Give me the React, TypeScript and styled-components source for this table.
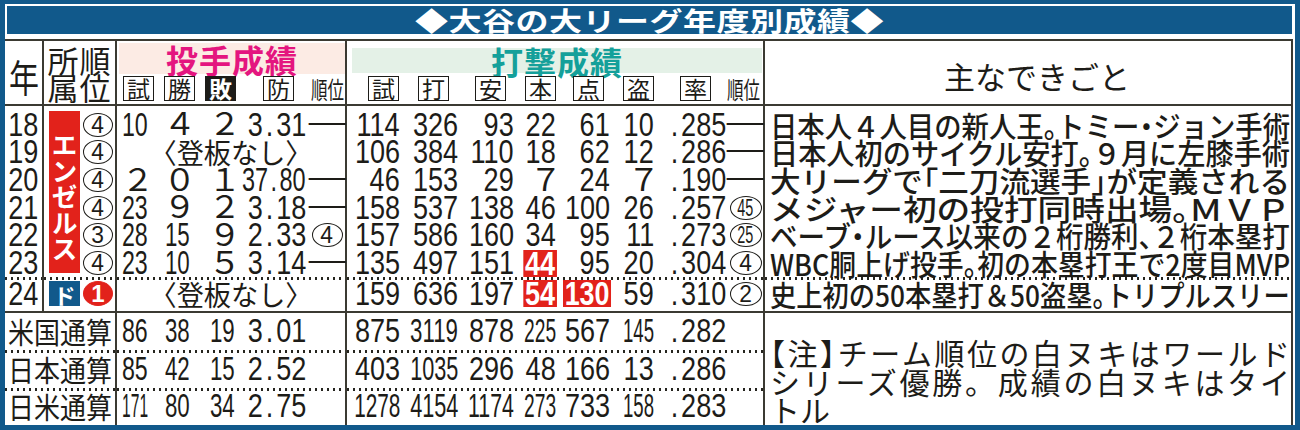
import React, { useLayoutEffect, useRef, useState } from "react";
import styled, { createGlobalStyle, css } from "styled-components";

const BLUE = "#11598b";
const LINE = "#3b3a32";
const INK = "#1d1c18";
const RED = "#e2221b";
const JP = `"Noto Sans CJK JP", "Noto Sans", sans-serif`;
const NUM = `"Liberation Sans", "Noto Sans CJK JP", sans-serif`;

const GlobalStyle = createGlobalStyle`
  html, body { margin: 0; padding: 0; background: #fff; }
  body { font-family: ${JP}; color: ${INK}; }
`;

// squeeze text horizontally so it fits (or fills) a width, like newspaper type
function useSqueeze(max: number, base: number, fill?: boolean) {
  const ref = useRef<HTMLSpanElement>(null);
  const [scale, setScale] = useState(base);
  useLayoutEffect(() => {
    const measure = () => {
      const el = ref.current;
      if (!el || !el.offsetWidth) return;
      const w = el.offsetWidth;
      setScale(fill ? max / w : Math.min(base, max / w));
    };
    measure();
    if (document.fonts) document.fonts.ready.then(measure);
  }, [max, base, fill]);
  return [ref, scale] as const;
}

const Frame = styled.div`
  width: 1300px;
  height: 430px;
  box-sizing: border-box;
  background: ${BLUE};
  padding: 4px 5px 5px 5px;
`;

const Panel = styled.div`
  height: 100%;
  background: #fff;
  display: flex;
  flex-direction: column;
`;

const TitleBar = styled.div`
  margin: 2px 3px 0 2px;
  height: 28px;
  flex-shrink: 0;
  background: ${BLUE};
  display: flex;
  align-items: center;
  justify-content: center;
`;

const TitleText = styled.span`
  color: #fff;
  font-weight: 700;
  font-size: 33px;
  line-height: 28px;
  letter-spacing: 0.5px;
  transform: scaleY(0.8);
`;

const Table = styled.div`
  margin: 5px 2px 0 0;
  border-top: 2px solid ${LINE};
  border-right: 2px solid ${LINE};
  display: grid;
  grid-template-columns: 39px 73px 230px 418px 1fr;
  grid-template-rows: 65px 32.67px repeat(5, 27.67px) 36px 37px 38px 37px;
`;

interface RowProps {
  $r: number;
  $first?: boolean;
  $dot?: boolean;
  $rule?: boolean;
}

const rowCell = css<RowProps>`
  grid-row: ${(p) => p.$r};
  box-sizing: border-box;
  min-width: 0;
  padding-top: ${(p) => (p.$first ? 5 : 0)}px;
  ${(p) =>
    p.$dot &&
    css`
      background-image: linear-gradient(90deg, #26251f 0 2.5px, transparent 2.5px);
      background-size: 6px 2.5px;
      background-repeat: repeat-x;
    `}
  ${(p) =>
    p.$rule &&
    css`
      border-bottom: 2px solid ${LINE};
    `}
`;

const YearCell = styled.div<RowProps>`
  ${rowCell};
  grid-column: 1;
  border-right: 2px solid ${LINE};
  display: flex;
  align-items: center;
  justify-content: center;
`;

const TeamCell = styled.div<RowProps & { $split?: boolean }>`
  ${rowCell};
  grid-column: 2;
  border-right: 2px solid ${LINE};
  display: flex;
  align-items: center;
  justify-content: ${(p) => (p.$split ? "space-between" : "flex-end")};
  padding-right: 2px;
  padding-left: ${(p) => (p.$split ? 5 : 0)}px;
`;

const PitchCell = styled.div<RowProps>`
  ${rowCell};
  grid-column: 3;
  border-right: 2px solid ${LINE};
  display: grid;
  grid-template-columns: 34px 42px 45px 71px 36px;
`;

const BatCell = styled.div<RowProps>`
  ${rowCell};
  grid-column: 4;
  border-right: 2px solid ${LINE};
  display: grid;
  grid-template-columns: 55px 58px 56px 42px 54px 44px 72px 35px;
`;

const EventCell = styled.div<RowProps>`
  ${rowCell};
  grid-column: 5;
  display: flex;
  align-items: center;
  padding-left: 5px;
`;

const SumLabelCell = styled.div<RowProps>`
  ${rowCell};
  grid-column: 1 / 3;
  border-right: 2px solid ${LINE};
  display: flex;
  align-items: center;
  justify-content: center;
`;

const NoteCell = styled.div`
  grid-column: 5;
  grid-row: 9 / 12;
  display: flex;
  flex-direction: column;
  justify-content: flex-end;
  padding: 0 0 1px 5px;
`;

const NoteLine = styled.div<{ $justify?: boolean; $halt?: boolean }>`
  width: 520px;
  white-space: nowrap;
  font-size: 30px;
  line-height: 28.5px;
  ${(p) =>
    p.$justify &&
    css`
      text-align: justify;
      text-align-last: justify;
    `}
  ${(p) =>
    p.$halt &&
    css`
      font-feature-settings: "halt";
    `}
`;

const Slot = styled.div<{ $pr?: number; $center?: boolean; $span?: boolean }>`
  display: flex;
  align-items: center;
  min-width: 0;
  justify-content: ${(p) => (p.$center || p.$span ? "center" : "flex-end")};
  padding-right: ${(p) => p.$pr ?? 0}px;
  ${(p) =>
    p.$span &&
    css`
      grid-column: 1 / -1;
    `}
`;

const NumText = styled.span<{ $wide?: boolean; $hi?: boolean; $origin: string }>`
  display: inline-block;
  flex-shrink: 0;
  white-space: nowrap;
  font-family: ${(p) => (p.$wide ? JP : NUM)};
  font-size: ${(p) => (p.$wide ? 31 : 33)}px;
  line-height: 26px;
  transform-origin: ${(p) => p.$origin} center;
  ${(p) =>
    p.$wide &&
    css`
      margin-right: -6px;
      margin-top: -5px;
    `}
  ${(p) =>
    p.$hi &&
    css`
      background: ${RED};
      color: #fff;
      font-weight: 700;
      padding: 0 2px;
      height: 27px;
      line-height: 28px;
      margin-right: -1px;
    `}
`;

const Dot = styled.span`
  margin: 0 3.5px;
`;

const JpText = styled.span<{ $size: number; $weight?: number; $origin?: string; $halt?: boolean }>`
  display: inline-block;
  flex-shrink: 0;
  white-space: nowrap;
  font-size: ${(p) => p.$size}px;
  line-height: ${(p) => Math.min(p.$size, 26)}px;
  font-weight: ${(p) => p.$weight ?? 400};
  transform-origin: ${(p) => p.$origin ?? "center"} center;
  ${(p) =>
    p.$halt &&
    css`
      font-feature-settings: "halt";
    `}
`;

const Dash = styled.span`
  display: inline-block;
  font-family: ${JP};
  font-size: 32px;
  line-height: 20px;
  transform: translateY(-6px) scaleX(1.45);
`;

const Ring = styled.span<{ $fill?: boolean; $w?: number; $h?: number }>`
  box-sizing: border-box;
  flex-shrink: 0;
  width: ${(p) => p.$w ?? 30}px;
  height: ${(p) => p.$h ?? 24}px;
  border-radius: 50%;
  border: 1.6px solid ${(p) => (p.$fill ? RED : INK)};
  background: ${(p) => (p.$fill ? RED : "transparent")};
  color: ${(p) => (p.$fill ? "#fff" : INK)};
  display: inline-flex;
  align-items: center;
  justify-content: center;
  font-family: ${NUM};
  font-size: 24px;
  font-weight: ${(p) => (p.$fill ? 700 : 400)};
  line-height: 1;
`;

const RingDigits = styled.span<{ $sx: number }>`
  display: inline-block;
  transform: scaleX(${(p) => p.$sx});
`;

const TeamBand = styled.div`
  grid-column: 2;
  grid-row: 2 / 8;
  margin: 5px 0 4px 5px;
  width: 31px;
  box-sizing: border-box;
  padding-top: 11px;
  background: ${RED};
  color: #fff;
  font-weight: 700;
  font-size: 26px;
  line-height: 31px;
  writing-mode: vertical-rl;
  text-align: center;
`;

const TeamChip = styled.span`
  width: 31px;
  height: 25px;
  background: ${BLUE};
  color: #fff;
  font-weight: 700;
  font-size: 22px;
  line-height: 1;
  display: inline-flex;
  align-items: center;
  justify-content: center;
`;

const HeadCell = styled.div<{ $c: number; $line?: boolean; $center?: boolean }>`
  grid-row: 1;
  grid-column: ${(p) => p.$c};
  box-sizing: border-box;
  min-width: 0;
  border-bottom: 2px solid ${LINE};
  ${(p) =>
    p.$line &&
    css`
      border-right: 2px solid ${LINE};
    `}
  display: flex;
  flex-direction: column;
  ${(p) =>
    p.$center &&
    css`
      align-items: center;
      justify-content: center;
    `}
`;

const HeadLine = styled.span`
  font-size: 31px;
  line-height: 27px;
  letter-spacing: 1px;
`;

const YearHead = styled.div`
  padding-top: 6px;
  display: flex;
  justify-content: center;
`;

const EventHead = styled.span`
  font-size: 31px;
  line-height: 1;
  padding: 5px 0 0 18px;
`;

const GroupBand = styled.div<{ $bg: string; $fg: string; $m: string; $h: number }>`
  margin: ${(p) => p.$m};
  height: ${(p) => p.$h}px;
  background: ${(p) => p.$bg};
  color: ${(p) => p.$fg};
  display: flex;
  align-items: center;
  justify-content: center;
  font-size: 32px;
  font-weight: 700;
  line-height: 1;
  letter-spacing: 1px;
  white-space: nowrap;
`;

const LabelRow = styled.div<{ $cols: string; $pl: number; $mt: number }>`
  display: grid;
  grid-template-columns: ${(p) => p.$cols};
  padding-left: ${(p) => p.$pl}px;
  margin-top: ${(p) => p.$mt}px;
  height: 25px;
  align-items: center;
`;

const Label = styled.span<{ $solid?: boolean }>`
  justify-self: start;
  box-sizing: border-box;
  width: 31px;
  height: 25px;
  border: 1.5px solid ${INK};
  background: ${(p) => (p.$solid ? INK : "#fff")};
  color: ${(p) => (p.$solid ? "#fff" : INK)};
  font-weight: ${(p) => (p.$solid ? 700 : 400)};
  font-size: 23px;
  line-height: 1;
  display: inline-flex;
  align-items: center;
  justify-content: center;
`;

function Num({ v, slot, hi, origin = "right" }: { v: string; slot: number; hi?: boolean; origin?: string }) {
  const wide = /[０-９]/.test(v);
  const [ref, s] = useSqueeze(wide ? 999 : slot, wide ? 1.05 : 0.82);
  const parts = v.split(".");
  return (
    <NumText ref={ref} $wide={wide} $hi={hi} $origin={origin} style={{ transform: `scaleX(${s})` }}>
      {parts.map((p, i) => (
        <React.Fragment key={i}>
          {i > 0 && <Dot>.</Dot>}
          {p}
        </React.Fragment>
      ))}
    </NumText>
  );
}

function Squeezed(props: {
  text: string;
  size: number;
  max: number;
  fill?: boolean;
  origin?: string;
  weight?: number;
  halt?: boolean;
}) {
  const [ref, s] = useSqueeze(props.max, 1, props.fill);
  return (
    <JpText
      ref={ref}
      $size={props.size}
      $weight={props.weight}
      $origin={props.origin}
      $halt={props.halt}
      style={{ transform: `scaleX(${s})` }}
    >
      {props.text}
    </JpText>
  );
}

function RankRing({ n, w = 30 }: { n: number; w?: number }) {
  return (
    <Ring $w={w}>
      <RingDigits $sx={n >= 10 ? 0.6 : 0.95}>{n}</RingDigits>
    </Ring>
  );
}

const P_SLOTS = [26, 25, 25, 64];
const B_SLOTS = [46, 48, 46, 32, 46, 31, 60];

// rank: number = ringed place, null = dash, undefined = nothing
function pitchSlots(vals: string[] | null, rank?: number | null) {
  if (!vals) {
    return (
      <Slot $span>
        <Squeezed text="〈登板なし〉" size={28} max={163} />
      </Slot>
    );
  }
  return (
    <>
      {vals.map((v, k) => (
        <Slot key={k} $pr={3}>
          <Num v={v} slot={P_SLOTS[k]} />
        </Slot>
      ))}
      <Slot $center>
        {rank === null && <Dash>—</Dash>}
        {typeof rank === "number" && <RankRing n={rank} w={31} />}
      </Slot>
    </>
  );
}

function batSlots(vals: string[], rank?: number | null, hi: number[] = []) {
  return (
    <>
      {vals.map((v, k) => (
        <Slot key={k} $pr={2}>
          <Num v={v} slot={hi.includes(k) ? B_SLOTS[k] + 2 : B_SLOTS[k]} hi={hi.includes(k)} />
        </Slot>
      ))}
      <Slot $center>
        {rank === null && <Dash>—</Dash>}
        {typeof rank === "number" && <RankRing n={rank} w={32} />}
      </Slot>
    </>
  );
}

interface Season {
  year: string;
  team: number;
  pitch: string[] | null;
  pRank: number | null;
  bat: string[];
  bRank: number | null;
  hi?: number[];
  note: string;
}

const seasons: Season[] = [
  {
    year: "18",
    team: 4,
    pitch: ["10", "４", "２", "3.31"],
    pRank: null,
    bat: ["114", "326", "93", "22", "61", "10", ".285"],
    bRank: null,
    note: "日本人４人目の新人王。トミー・ジョン手術",
  },
  {
    year: "19",
    team: 4,
    pitch: null,
    pRank: null,
    bat: ["106", "384", "110", "18", "62", "12", ".286"],
    bRank: null,
    note: "日本人初のサイクル安打。９月に左膝手術",
  },
  {
    year: "20",
    team: 4,
    pitch: ["２", "０", "１", "37.80"],
    pRank: null,
    bat: ["46", "153", "29", "７", "24", "７", ".190"],
    bRank: null,
    note: "大リーグで「二刀流選手」が定義される",
  },
  {
    year: "21",
    team: 4,
    pitch: ["23", "９", "２", "3.18"],
    pRank: null,
    bat: ["158", "537", "138", "46", "100", "26", ".257"],
    bRank: 45,
    note: "メジャー初の投打同時出場。ＭＶＰ",
  },
  {
    year: "22",
    team: 3,
    pitch: ["28", "15", "９", "2.33"],
    pRank: 4,
    bat: ["157", "586", "160", "34", "95", "11", ".273"],
    bRank: 25,
    note: "ベーブ・ルース以来の２桁勝利、２桁本塁打",
  },
  {
    year: "23",
    team: 4,
    pitch: ["23", "10", "５", "3.14"],
    pRank: null,
    bat: ["135", "497", "151", "44", "95", "20", ".304"],
    bRank: 4,
    hi: [3],
    note: "WBC胴上げ投手。初の本塁打王で2度目MVP",
  },
];

const dodgers = {
  year: "24",
  bat: ["159", "636", "197", "54", "130", "59", ".310"],
  bRank: 2,
  hi: [3, 4],
  note: "史上初の50本塁打＆50盗塁。トリプルスリー",
};

const totals = [
  { label: "米国通算", pitch: ["86", "38", "19", "3.01"], bat: ["875", "3119", "878", "225", "567", "145", ".282"] },
  { label: "日本通算", pitch: ["85", "42", "15", "2.52"], bat: ["403", "1035", "296", "48", "166", "13", ".286"] },
  { label: "日米通算", pitch: ["171", "80", "34", "2.75"], bat: ["1278", "4154", "1174", "273", "733", "158", ".283"] },
];

export default function App() {
  return (
    <>
      <GlobalStyle />
      <Frame>
        <Panel>
          <TitleBar>
            <TitleText>◆大谷の大リーグ年度別成績◆</TitleText>
          </TitleBar>
          <Table>
            <HeadCell $c={1} $line $center>
              <YearHead>
                <Squeezed text="年" size={38} max={30} />
              </YearHead>
            </HeadCell>
            <HeadCell $c={2} $line $center>
              <HeadLine>所順</HeadLine>
              <HeadLine>属位</HeadLine>
            </HeadCell>
            <HeadCell $c={3} $line>
              <GroupBand $bg="#fcebe4" $fg="#e4157f" $m="2px 0 0 2px" $h={31}>
                投手成績
              </GroupBand>
              <LabelRow $cols="41px 41px 58px 48px auto" $pl={6} $mt={2}>
                <Label>試</Label>
                <Label>勝</Label>
                <Label $solid>敗</Label>
                <Label>防</Label>
                <Squeezed text="順位" size={24} max={33} origin="left" />
              </LabelRow>
            </HeadCell>
            <HeadCell $c={4} $line>
              <GroupBand $bg="#e4f1e7" $fg="#14a09a" $m="7px 1px 0 5px" $h={25}>
                打撃成績
              </GroupBand>
              <LabelRow $cols="50px 57px 50px 48px 50px 57px 47px auto" $pl={21} $mt={3}>
                <Label>試</Label>
                <Label>打</Label>
                <Label>安</Label>
                <Label>本</Label>
                <Label>点</Label>
                <Label>盗</Label>
                <Label>率</Label>
                <Squeezed text="順位" size={24} max={33} origin="left" />
              </LabelRow>
            </HeadCell>
            <HeadCell $c={5} $center>
              <EventHead>主なできごと</EventHead>
            </HeadCell>

            {seasons.map((s, i) => {
              const r = i + 2;
              const first = i === 0;
              return (
                <React.Fragment key={s.year}>
                  <YearCell $r={r} $first={first}>
                    <Num v={s.year} slot={34} origin="center" />
                  </YearCell>
                  <TeamCell $r={r} $first={first}>
                    <RankRing n={s.team} />
                  </TeamCell>
                  <PitchCell $r={r} $first={first}>
                    {pitchSlots(s.pitch, s.pRank)}
                  </PitchCell>
                  <BatCell $r={r} $first={first}>
                    {batSlots(s.bat, s.bRank, s.hi)}
                  </BatCell>
                  <EventCell $r={r} $first={first}>
                    <Squeezed text={s.note} size={29} max={520} fill origin="left" weight={500} halt />
                  </EventCell>
                </React.Fragment>
              );
            })}
            <TeamBand>エンゼルス</TeamBand>

            <YearCell $r={8} $dot $rule>
              <Num v={dodgers.year} slot={34} origin="center" />
            </YearCell>
            <TeamCell $r={8} $dot $rule $split>
              <TeamChip>ド</TeamChip>
              <Ring $fill $w={30} $h={25}>
                1
              </Ring>
            </TeamCell>
            <PitchCell $r={8} $dot $rule>
              {pitchSlots(null)}
            </PitchCell>
            <BatCell $r={8} $dot $rule>
              {batSlots(dodgers.bat, dodgers.bRank, dodgers.hi)}
            </BatCell>
            <EventCell $r={8} $dot $rule>
              <Squeezed text={dodgers.note} size={29} max={520} fill origin="left" weight={500} halt />
            </EventCell>

            {totals.map((t, i) => {
              const r = 9 + i;
              const dot = i > 0;
              return (
                <React.Fragment key={t.label}>
                  <SumLabelCell $r={r} $dot={dot}>
                    <Squeezed text={t.label} size={29} max={104} />
                  </SumLabelCell>
                  <PitchCell $r={r} $dot={dot}>
                    {pitchSlots(t.pitch)}
                  </PitchCell>
                  <BatCell $r={r} $dot={dot}>
                    {batSlots(t.bat)}
                  </BatCell>
                </React.Fragment>
              );
            })}
            <NoteCell>
              <NoteLine $justify $halt>
                【注】チーム順位の白ヌキはワールド
              </NoteLine>
              <NoteLine $justify>シリーズ優勝。成績の白ヌキはタイ</NoteLine>
              <NoteLine>トル</NoteLine>
            </NoteCell>
          </Table>
        </Panel>
      </Frame>
    </>
  );
}
